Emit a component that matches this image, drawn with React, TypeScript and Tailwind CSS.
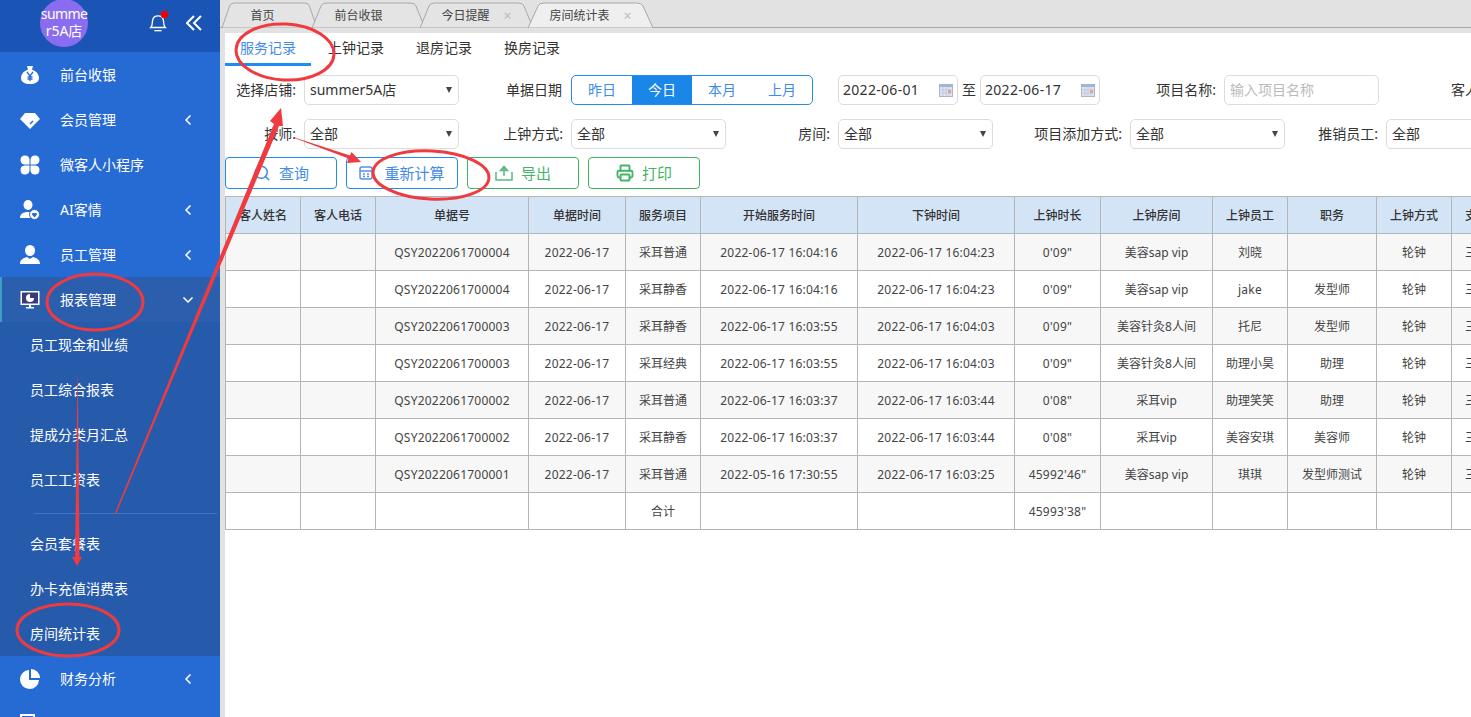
import React from 'react';
import { ChevronLeft, ChevronDown, Search, Printer } from 'lucide-react';

const font = { fontFamily: '"Noto Sans", "Noto Sans CJK SC", sans-serif' };

const MoneyIcon = () => (
  <svg viewBox="0 0 20 20" className="w-5 h-5">
    <path d="M7 1h6l-1 3.500c4 1.500 7 4.500 7 8.500 0 4-4 6-9 6s-9-2-9-6c0-4 3-7 7-8.500z" fill="#fff" />
    <path d="M7 7l3 4 3-4M10 11v5M7.500 12h5M7.500 14h5" stroke="#266ad4" strokeWidth="1.300" fill="none" />
  </svg>
);
const GemIcon = () => (
  <svg viewBox="0 0 20 20" className="w-5 h-5">
    <path d="M5 3h10l5 6-10 10L0 9z" fill="#fff" />
    <path d="M13 11l-3 3" stroke="#266ad4" strokeWidth="1.400" />
  </svg>
);
const CloverIcon = () => (
  <svg viewBox="0 0 20 20" className="w-5 h-5" fill="#fff">
    <path d="M9.500 9.500H4.500a4.500 4.500 0 1 1 5-5z" />
    <path d="M10.500 9.500h5a4.500 4.500 0 1 0-5-5z" />
    <path d="M9.500 10.500H4.500a4.500 4.500 0 1 0 5 5z" />
    <path d="M10.500 10.500h5a4.500 4.500 0 1 1-5 5z" />
  </svg>
);
const UserHeartIcon = () => (
  <svg viewBox="0 0 20 20" className="w-5 h-5">
    <ellipse cx="8" cy="5" rx="4.500" ry="5" fill="#fff" />
    <path d="M0 18c0-4 3-6 8-6s6 2 6 6z" fill="#fff" />
    <circle cx="14.500" cy="14.500" r="5" fill="#fff" stroke="#266ad4" strokeWidth="1" />
    <path d="M14.500 17.500l-2.500-3a1.500 1.500 0 0 1 2.500-1.200 1.500 1.500 0 0 1 2.500 1.200z" fill="#266ad4" />
  </svg>
);
const UserIcon = () => (
  <svg viewBox="0 0 20 20" className="w-5 h-5" fill="#fff">
    <ellipse cx="10" cy="5.500" rx="5" ry="5.500" />
    <path d="M0 19c0-4 3-6 7-7l3 2 3-2c4 1 7 3 7 7z" />
  </svg>
);
const MonitorIcon = () => (
  <svg viewBox="0 0 20 20" className="w-5 h-5">
    <rect x="0.500" y="1" width="19" height="14" fill="#fff" />
    <rect x="2" y="2.500" width="16" height="11" fill="#3a3a7a" />
    <circle cx="10" cy="8" r="4" fill="#fff" />
    <path d="M10 8V4h4v4z" fill="#3a3a7a" />
    <path d="M9 15h2v2h3v1.500H6V17h3z" fill="#fff" />
  </svg>
);
const PieIcon = () => (
  <svg viewBox="0 0 20 20" className="w-5 h-5" fill="#fff">
    <path d="M9 1a9.500 9.500 0 1 0 10 10H9z" />
    <path d="M11 0a9 9 0 0 1 9 9h-9z" />
  </svg>
);
const ListIcon = () => (
  <svg viewBox="0 0 20 20" className="w-5 h-5">
    <rect x="1" y="1" width="13" height="18" fill="none" stroke="#fff" strokeWidth="2" />
  </svg>
);

const Bell = () => (
  <svg viewBox="0 0 20 22" className="w-[18px] h-5" fill="none" stroke="#fff" strokeWidth="1.500">
    <path d="M2 16c2-2 1.500-5 2-8 .5-3 3-5 6-5s5.500 2 6 5c.5 3 0 6 2 8z" />
    <path d="M6 19.500h8" />
  </svg>
);

const DoubleLeft = () => (
  <svg viewBox="0 0 16 16" className="w-4 h-4" fill="none" stroke="#fff" strokeWidth="2">
    <path d="M8 1L1 8l7 7M15 1L8 8l7 7" />
  </svg>
);

const menuTop = [
  { name: '前台收银', icon: <MoneyIcon /> },
  { name: '会员管理', icon: <GemIcon />, arrow: true },
  { name: '微客人小程序', icon: <CloverIcon /> },
  { name: 'AI客情', icon: <UserHeartIcon />, arrow: true },
  { name: '员工管理', icon: <UserIcon />, arrow: true },
];

const MenuRow = ({ name, icon, arrow }: { name: string; icon: React.ReactNode; arrow?: boolean }) => (
  <div className="h-[45px] flex items-center pl-5 text-sm text-white">
    <span className="w-10 flex">{icon}</span>
    <span>{name}</span>
    {arrow && <ChevronLeft className="w-4 h-4 ml-auto mr-6" strokeWidth={2.5} />}
  </div>
);

const SubRow = ({ name }: { name: string }) => (
  <div className="h-[45px] flex items-center pl-[30px] text-sm text-white">{name}</div>
);

const Sidebar = () => (
  <div className="w-[220px] shrink-0 h-full bg-[#266ad4] overflow-hidden">
    <div className="h-[52px] bg-[#1a55b5] relative flex items-center">
      <div className="w-12 h-12 rounded-full bg-[#8a6cf0] ml-10 -mt-[6px] text-sm leading-[17px] text-center text-white whitespace-nowrap pt-[6px]">
        <div className="tracking-[-0.6px]">summe</div>
        <div>r5A店</div>
      </div>
      <div className="relative ml-[61px] -mt-[6px]">
        <Bell />
        <span className="absolute -top-[2px] right-[-1px] w-[7px] h-[7px] bg-[#f00000] rounded-[2px]" />
      </div>
      <div className="ml-[19px] -mt-[6px] flex">
        <DoubleLeft />
      </div>
    </div>
    {menuTop.map((m) => (
      <MenuRow key={m.name} {...m} />
    ))}
    <div className="h-[45px] flex items-center pl-5 text-sm text-white bg-[#2c5eae] border-l-2 border-[#3a9fc0]">
      <span className="w-10 flex -ml-[2px]">
        <MonitorIcon />
      </span>
      <span>报表管理</span>
      <ChevronDown className="w-4 h-4 ml-auto mr-6" strokeWidth={2.5} />
    </div>
    <div className="bg-[#265bac] h-[334px]">
      <SubRow name="员工现金和业绩" />
      <SubRow name="员工综合报表" />
      <SubRow name="提成分类月汇总" />
      <SubRow name="员工工资表" />
      <div className="h-[19px] pt-[11px] pl-[34px] pr-[3px]">
        <div className="w-full h-px bg-[#4274c8]" />
      </div>
      <SubRow name="会员套餐表" />
      <SubRow name="办卡充值消费表" />
      <SubRow name="房间统计表" />
    </div>
    <MenuRow name="财务分析" icon={<PieIcon />} arrow />
    <MenuRow name="" icon={<ListIcon />} />
  </div>
);

const Tab = ({ name, w, close, active, first }: { name: string; w: string; close?: boolean; active?: boolean; first?: boolean }) => (
  <div className={`relative h-[27px] shrink-0 flex items-center justify-center gap-[14px] text-xs text-[#444] pt-[3px] ${w} ${first ? '' : '-ml-[5px]'} ${active ? 'z-10' : ''}`}>
    <svg viewBox="0 0 100 27" preserveAspectRatio="none" className="absolute inset-0 w-full h-full">
      <path
        d="M0 27 L8 5 Q9 2 13 2 L87 2 Q91 2 92 5 L100 27 Z"
        fill={active ? '#efefef' : '#e4e4e4'}
        stroke="#a8a8a8"
        strokeWidth="1"
        vectorEffect="non-scaling-stroke"
      />
    </svg>
    <span className="relative">{name}</span>
    {close && <span className="relative text-[#bbb] text-sm leading-none">×</span>}
  </div>
);

const Arrow = () => <span className="ml-auto mr-[6px] w-0 h-0 border-x-[3px] border-x-transparent border-t-[6px] border-t-[#444]" />;

const SelectBox = ({ value }: { value: string }) => (
  <div className="w-[155px] shrink-0 h-[30px] border border-[#dcdcdc] rounded-[5px] flex items-center pl-[5px] text-sm text-[#333] bg-white">
    <span>{value}</span>
    <Arrow />
  </div>
);

const Calendar = () => (
  <svg viewBox="0 0 14 13" className="w-[14px] h-[13px] ml-auto mr-[2px]">
    <rect x="0.500" y="0.500" width="13" height="12" fill="#dfe6f2" stroke="#aab6cc" />
    <rect x="0.500" y="0.500" width="13" height="2.500" fill="#9fb4d6" />
    <path d="M1 6h12M1 9h12M4 3v9M7 3v9M10 3v9" stroke="#b8c4d8" strokeWidth="0.800" />
    <rect x="9" y="6" width="3" height="3" fill="#e8a090" />
  </svg>
);

const DateBox = ({ value }: { value: string }) => (
  <div className="w-[120px] shrink-0 h-[30px] border border-[#dcdcdc] rounded-[5px] flex items-center pl-[4px] pr-[2px] text-sm text-[#333] tracking-[0.3px]">
    <span>{value}</span>
    <Calendar />
  </div>
);

const CalcIcon = () => (
  <svg viewBox="0 0 14 14" className="w-[14px] h-[14px]" fill="none" stroke="#5b8def" strokeWidth="1.500">
    <rect x="1" y="1" width="12" height="12" rx="2" />
    <path d="M1 5h12M4 8h2M8 8h2M4 10.500h2M8 10.500h2" />
  </svg>
);

const ExportIcon = () => (
  <svg viewBox="0 0 18 16" className="w-[18px] h-4" fill="none" stroke="#57b98a" strokeWidth="1.500">
    <path d="M1 7v8h16V7" />
    <path d="M9 11V2M5.500 5.500L9 1.500l3.500 4z" fill="#e3c46a" />
  </svg>
);

const Btn = ({ label, icon, color, gap }: { label: string; icon: React.ReactNode; color: 'blue' | 'green'; gap: string }) => (
  <div
    className={`w-[112px] h-8 border rounded-[4px] flex items-center justify-center text-[15px] ${gap} ${
      color === 'blue' ? 'border-[#1e8cf0] text-[#3f8ce8]' : 'border-[#3cb45a] text-[#45b565]'
    }`}
  >
    {icon}
    <span>{label}</span>
  </div>
);

const cols = [75, 75, 153, 97, 75, 157, 157, 86, 112, 75, 89, 75, 75];
const heads = ['客人姓名', '客人电话', '单据号', '单据时间', '服务项目', '开始服务时间', '下钟时间', '上钟时长', '上钟房间', '上钟员工', '职务', '上钟方式', '支付方式'];
const rows = [
  ['', '', 'QSY2022061700004', '2022-06-17', '采耳普通', '2022-06-17 16:04:16', '2022-06-17 16:04:23', '0\'09"', '美容sap vip', '刘晓', '', '轮钟', '三七分成'],
  ['', '', 'QSY2022061700004', '2022-06-17', '采耳静香', '2022-06-17 16:04:16', '2022-06-17 16:04:23', '0\'09"', '美容sap vip', 'jake', '发型师', '轮钟', '三七分成'],
  ['', '', 'QSY2022061700003', '2022-06-17', '采耳静香', '2022-06-17 16:03:55', '2022-06-17 16:04:03', '0\'09"', '美容针灸8人间', '托尼', '发型师', '轮钟', '三七分成'],
  ['', '', 'QSY2022061700003', '2022-06-17', '采耳经典', '2022-06-17 16:03:55', '2022-06-17 16:04:03', '0\'09"', '美容针灸8人间', '助理小昊', '助理', '轮钟', '三七分成'],
  ['', '', 'QSY2022061700002', '2022-06-17', '采耳普通', '2022-06-17 16:03:37', '2022-06-17 16:03:44', '0\'08"', '采耳vip', '助理笑笑', '助理', '轮钟', '三七分成'],
  ['', '', 'QSY2022061700002', '2022-06-17', '采耳静香', '2022-06-17 16:03:37', '2022-06-17 16:03:44', '0\'08"', '采耳vip', '美容安琪', '美容师', '轮钟', '三七分成'],
  ['', '', 'QSY2022061700001', '2022-06-17', '采耳普通', '2022-05-16 17:30:55', '2022-06-17 16:03:25', '45992\'46"', '美容sap vip', '琪琪', '发型师测试', '轮钟', '三七分成'],
  ['', '', '', '', '合计', '', '', '45993\'38"', '', '', '', '', ''],
];

// latin-only cells run a bit wider in the reference
const isLatin = (s: string) => /^[\x00-\x7f]+$/.test(s);

// red marks drawn over the screenshot
const Annotations = () => (
  <svg className="absolute inset-0 w-full h-full pointer-events-none z-20" viewBox="0 0 1471 717">
    <g fill="none" stroke="#ef3b3f" strokeWidth="3">
      <ellipse cx="285" cy="52" rx="49" ry="28" transform="rotate(3 285 52)" />
      <ellipse cx="431" cy="175" rx="58" ry="24" transform="rotate(3 431 175)" />
      <ellipse cx="95" cy="302" rx="48" ry="28" />
      <ellipse cx="68" cy="630" rx="51" ry="26" />
    </g>
    <g fill="#ef3b3f">
      <path d="M115 513 L274 124 L270 121 L281 108 L283 126 L279 126 L116 514 Z" />
      <path d="M77.800 375 L79.500 557 L82 557 L77 566 L72 557 L75 557 L77.500 375 Z" />
      <path d="M293 137 L350 155.500 L351.500 152 L361 162 L347 163 L348.500 158.500 L293 137.500 Z" />
    </g>
  </svg>
);

const App = () => (
  <div className="relative w-[1471px] h-[717px] overflow-hidden flex bg-[#e2e2e2]" style={font}>
    <Sidebar />
    <div className="flex-1 min-w-0 h-full flex flex-col">
      <div className="h-7 shrink-0 border-b border-[#a8a8a8] flex pl-[2px] pt-[1px]">
        <Tab name="首页" w="w-[95px] pr-[14px]" first />
        <Tab name="前台收银" w="w-[113px] pr-[20px]" />
        <Tab name="今日提醒" w="w-[113px]" close />
        <Tab name="房间统计表" w="w-[125px]" close active />
      </div>
      <div className="mt-[5px] ml-[5px] flex-1 bg-white overflow-hidden">
        <div className="flex h-[33px] text-[14px] text-[#333]">
          <div className="w-[86px] border-b-[3px] border-[#1e8cf0] text-[#3f8ce8] pl-[15px] pt-[4px] mr-[2px]">服务记录</div>
          <div className="w-[88px] pl-[15px] pt-[4px]">上钟记录</div>
          <div className="w-[88px] pl-[15px] pt-[4px]">退房记录</div>
          <div className="w-[88px] pl-[15px] pt-[4px]">换房记录</div>
        </div>

        <div className="flex items-center h-[30px] mt-[9px] text-sm text-[#333] whitespace-nowrap">
          <span className="w-[71px] text-right mr-2 shrink-0">选择店铺:</span>
          <SelectBox value="summer5A店" />
          <span className="w-[103px] text-right mr-[9px] shrink-0">单据日期</span>
          <div className="w-[242px] shrink-0 h-[30px] border border-[#1e8cf0] rounded-[5px] flex overflow-hidden text-sm text-[#3f8ce8]">
            <span className="w-[60px] text-center leading-[28px]">昨日</span>
            <span className="w-[60px] text-center leading-[28px] bg-[#1a86e8] text-white">今日</span>
            <span className="w-[60px] text-center leading-[28px]">本月</span>
            <span className="w-[60px] text-center leading-[28px]">上月</span>
          </div>
          <span className="w-[25px] shrink-0" />
          <DateBox value="2022-06-01" />
          <span className="w-[22px] text-center shrink-0 text-sm">至</span>
          <DateBox value="2022-06-17" />
          <span className="w-[116px] text-right mr-2 shrink-0">项目名称:</span>
          <div className="w-[155px] shrink-0 h-[30px] border border-[#dcdcdc] rounded-[5px] flex items-center pl-[5px] text-[#bbb]">输入项目名称</div>
          <span className="ml-[72px] shrink-0">客人姓名:</span>
        </div>

        <div className="flex items-center h-[30px] mt-[14px] text-sm text-[#333] whitespace-nowrap">
          <span className="w-[71px] text-right mr-2 shrink-0">按师:</span>
          <SelectBox value="全部" />
          <span className="w-[104px] text-right mr-2 shrink-0">上钟方式:</span>
          <SelectBox value="全部" />
          <span className="w-[104px] text-right mr-2 shrink-0">房间:</span>
          <SelectBox value="全部" />
          <span className="w-[129px] text-right mr-2 shrink-0">项目添加方式:</span>
          <SelectBox value="全部" />
          <span className="w-[93px] text-right mr-2 shrink-0">推销员工:</span>
          <SelectBox value="全部" />
        </div>

        <div className="flex gap-[9px] mt-2">
          <Btn label="查询" color="blue" gap="gap-2" icon={<Search className="w-[18px] h-[18px] text-[#3f8ce8]" strokeWidth={2} />} />
          <Btn label="重新计算" color="blue" gap="gap-[11px]" icon={<CalcIcon />} />
          <Btn label="导出" color="green" gap="gap-2" icon={<ExportIcon />} />
          <Btn label="打印" color="green" gap="gap-2" icon={<Printer className="w-[18px] h-[18px] text-[#45b565]" strokeWidth={2.5} />} />
        </div>

        <table className="mt-[7px] table-fixed border-collapse text-xs text-[#444] w-[1301px]">
          <colgroup>
            {cols.map((w, i) => (
              <col key={i} style={{ width: w }} />
            ))}
          </colgroup>
          <thead>
            <tr className="h-[37px] bg-[#d3e4f7]">
              {heads.map((h) => (
                <th key={h} className="border border-[#b5b5b5] font-medium text-[#333] whitespace-nowrap p-0 pt-px">{h}</th>
              ))}
            </tr>
          </thead>
          <tbody>
            {rows.map((r, i) => (
              <tr key={i} className={`h-[37px] ${i % 2 === 0 && i < 7 ? 'bg-[#f7f7f7]' : 'bg-white'}`}>
                {r.map((c, j) => (
                  <td key={j} className={`border border-[#b5b5b5] text-center whitespace-nowrap p-0 pt-px ${isLatin(c) ? 'tracking-[0.22px]' : ''}`}>{c}</td>
                ))}
              </tr>
            ))}
          </tbody>
        </table>
      </div>
    </div>
    <Annotations />
  </div>
);

export default App;
